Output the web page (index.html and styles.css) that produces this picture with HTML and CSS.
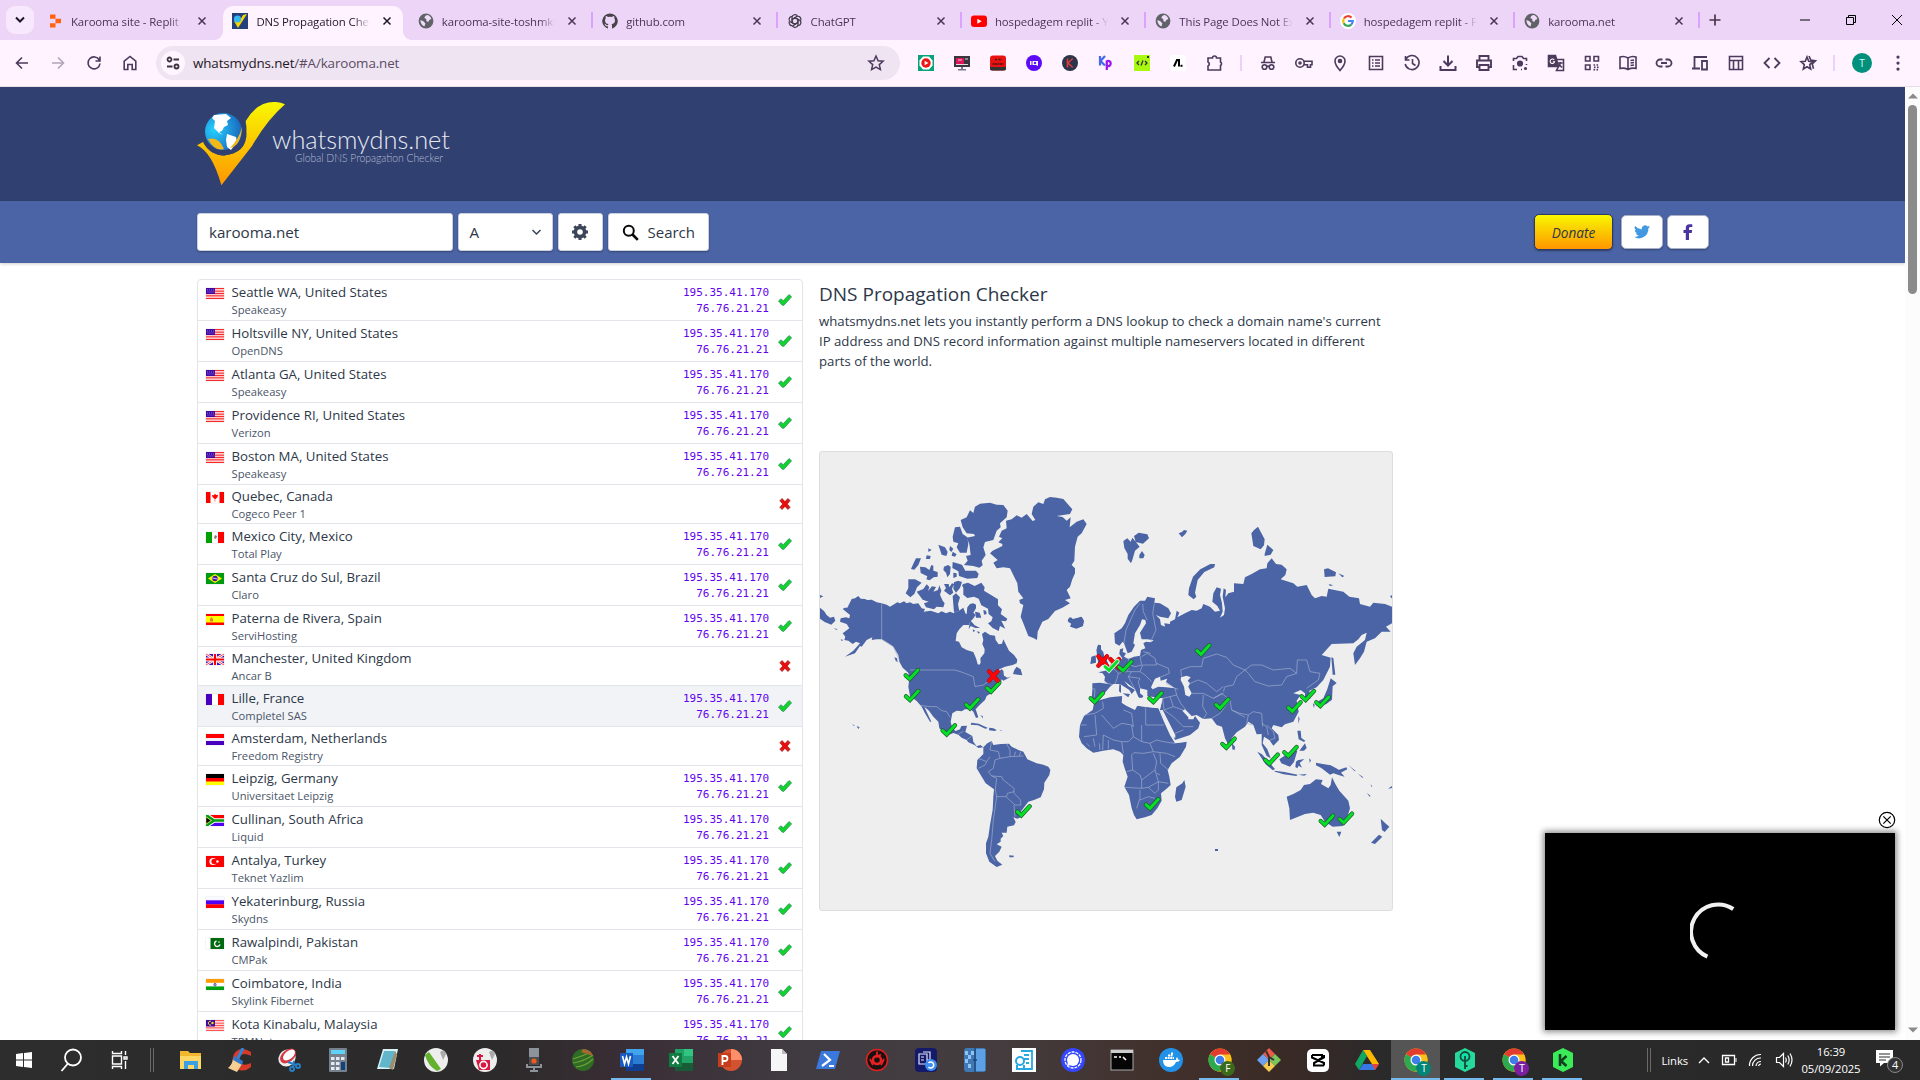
FILE: index.html
```html
<!DOCTYPE html>
<html lang="en">
<head>
<meta charset="utf-8">
<title>DNS Propagation Checker</title>
<link rel="stylesheet" href="styles.css">
</head>
<body>
<svg class="defs" width="0" height="0">
<defs>
<linearGradient id="gold" x1="0" y1="0" x2="0" y2="1"><stop offset="0" stop-color="#f8f800"/><stop offset="1" stop-color="#ff9600"/></linearGradient>
<radialGradient id="ocean" cx=".25" cy=".45" r=".8"><stop offset="0" stop-color="#25d0ff"/><stop offset="1" stop-color="#1a60b8"/></radialGradient>
<symbol id="globe" viewBox="0 0 16 16"><circle cx="8" cy="8" r="7.400" fill="#5f6368"/><path d="M9 2c2 0 4 2 4.300 4l-2 1-1 2-2-1 0-2-2-1 1-2zM2.400 7l3 1.200 2 2.300-1 3C4 12.500 2.400 10 2.400 7z" fill="#f1dcf9"/></symbol>
<symbol id="x" viewBox="0 0 10 10"><path d="M1.500 1.500l7 7M8.500 1.500l-7 7" stroke="currentColor" stroke-width="1.500"/></symbol>
<symbol id="tick" viewBox="0 0 14 12"><path d="M.5 7L3 4.800 5.200 6.800 11 .6 13.600 2.800 5.800 11.400 4 11z" fill="#0fd52b" stroke="#3c9a6a" stroke-width=".9" stroke-linejoin="round"/></symbol>
<symbol id="cross" viewBox="0 0 12 12"><path d="M3 2.800l6 6.400M9 2.800l-6 6.400" stroke="#c03030" stroke-width="3.800" stroke-linecap="square"/><path d="M3 2.800l6 6.400M9 2.800l-6 6.400" stroke="#e80c0c" stroke-width="3"/></symbol>
<g id="mt"><path d="M-18 4L-6 15 19-12" fill="none" stroke="#1f5a30" stroke-width="13" stroke-linecap="round"/><path d="M-18 4L-6 15 19-12" fill="none" stroke="#05e026" stroke-width="9" stroke-linecap="round"/></g>
<g id="mw"><path d="M-18 4L-6 15 19-12" fill="none" stroke="#e8fbea" stroke-width="14" stroke-linecap="round"/><path d="M-18 4L-6 15 19-12" fill="none" stroke="#05e026" stroke-width="9" stroke-linecap="round"/></g>
<g id="mx"><path d="M-13-14L13 14M13-14L-13 14" stroke="#a01020" stroke-width="13" stroke-linecap="round"/><path d="M-13-14L13 14M13-14L-13 14" stroke="#fb0505" stroke-width="10" stroke-linecap="round"/></g>
<symbol id="us" viewBox="0 0 18 11"><rect width="18" height="11" fill="#fff"/><path d="M0 .7h18M0 3.100h18M0 5.500h18M0 7.900h18M0 10.300h18" stroke="#f52a2a" stroke-width="1.300"/><rect width="9" height="6" fill="#4108a8"/><path d="M1 2h7M1.500 4h7" stroke="#8c74d4" stroke-dasharray="1 1"/></symbol>
<symbol id="my" viewBox="0 0 18 11"><rect width="18" height="11" fill="#fff"/><path d="M0 .7h18M0 3.100h18M0 5.500h18M0 7.900h18M0 10.300h18" stroke="#f55" stroke-width="1.300"/><rect width="9" height="6.500" fill="#4108a8"/><path d="M5 1.200a2 2 0 1 0 0 3.800" stroke="#ee0" fill="none"/><circle cx="6.500" cy="3" r="1.200" fill="#ee0"/></symbol>
<symbol id="ca" viewBox="0 0 18 11"><rect width="18" height="11" fill="#fff"/><path d="M0 0h4.500v11H0zM13.500 0H18v11h-4.500zM9 1.500l1 1.500 2-.3-.5 2.300-1.500 1.700-.8.300V9.500h-.5V7L6.500 5 6 3l2 .2z" fill="#f00"/></symbol>
<symbol id="mx2" viewBox="0 0 18 11"><rect width="18" height="11" fill="#fff"/><path d="M0 0h6v11H0z" fill="#00a000"/><path d="M12 0h6v11h-6z" fill="#f00"/><path d="M8 6l1-3 2 1-1 3z" fill="#876"/></symbol>
<symbol id="br" viewBox="0 0 18 11"><rect width="18" height="11" fill="#009a10"/><path d="M9 1l7 4.500L9 10 2 5.500z" fill="#f6f600"/><circle cx="9" cy="5.500" r="2.700" fill="#3c10b0"/><path d="M6.500 5l5 1" stroke="#ccf"/></symbol>
<symbol id="es" viewBox="0 0 18 11"><rect width="18" height="11" fill="#f00"/><rect y="2" width="18" height="6.500" fill="#ff0"/><path d="M4 7.500V5l1.500-2L7 5v2.500z" fill="#e08040"/></symbol>
<symbol id="gb" viewBox="0 0 18 11"><rect width="18" height="11" fill="#4010b0"/><path d="M0 0l18 11M18 0L0 11" stroke="#fff" stroke-width="2.600"/><path d="M0 0l18 11M18 0L0 11" stroke="#f33" stroke-width=".9"/><path d="M9 0v11M0 5.500h18" stroke="#fff" stroke-width="4"/><path d="M9 0v11M0 5.500h18" stroke="#f00" stroke-width="2.200"/></symbol>
<symbol id="fr" viewBox="0 0 18 11"><rect width="18" height="11" fill="#fff"/><path d="M0 0h6v11H0z" fill="#4800c0"/><path d="M12 0h6v11h-6z" fill="#f00"/></symbol>
<symbol id="nl" viewBox="0 0 18 11"><rect width="18" height="11" fill="#f4f0ff"/><path d="M0 0h18v4H0z" fill="#f00"/><path d="M0 7h18v4H0z" fill="#4800c0"/></symbol>
<symbol id="de" viewBox="0 0 18 11"><rect width="18" height="11" fill="#f00"/><path d="M0 0h18v4H0z" fill="#000"/><path d="M0 7.500h18V11H0z" fill="#ff0"/></symbol>
<symbol id="za" viewBox="0 0 18 11"><rect width="18" height="5.500" fill="#f00"/><rect y="5.500" width="18" height="5.500" fill="#5000f0"/><path d="M0 0l8 5.500L0 11M7 5.500h11" stroke="#fff" stroke-width="4.500" fill="none"/><path d="M0 0l8 5.500L0 11M7 5.500h11" stroke="#00a010" stroke-width="2.600" fill="none"/><path d="M0 2l5 3.500L0 9z" fill="#000" stroke="#dd0" stroke-width=".6"/></symbol>
<symbol id="tr" viewBox="0 0 18 11"><rect width="18" height="11" fill="#f00"/><circle cx="7" cy="5.500" r="3.600" fill="#fff"/><circle cx="8.200" cy="5.500" r="2.800" fill="#f00"/><circle cx="11.500" cy="5.500" r="1.200" fill="#fff"/></symbol>
<symbol id="ru" viewBox="0 0 18 11"><rect width="18" height="11" fill="#f8f8ff"/><path d="M0 3.300h18v4.200H0z" fill="#5000f0"/><path d="M0 7.300h18V11H0z" fill="#f00"/></symbol>
<symbol id="pk" viewBox="0 0 18 11"><rect width="18" height="11" fill="#fff"/><path d="M4.500 0H18v11H4.500z" fill="#006a10"/><path d="M10.500 3a2.800 2.800 0 1 0 3.500 3.500" stroke="#fff" fill="none" stroke-width="1.400"/><circle cx="13" cy="4" r=".8" fill="#fff"/></symbol>
<symbol id="in" viewBox="0 0 18 11"><rect width="18" height="11" fill="#fff"/><path d="M0 0h18v3.800H0z" fill="#ff9a00"/><path d="M0 7.400h18V11H0z" fill="#00a010"/><circle cx="9" cy="5.600" r="1.300" fill="#99c" stroke="#53b" stroke-width=".6"/></symbol>
<symbol id="chrome" viewBox="0 0 24 24"><circle cx="12" cy="12" r="11.500" fill="#fbc116"/><path d="M12 12L2 6.300A11.500 11.500 0 0 1 22 6.300z" fill="#e33b2e"/><path d="M12 12L2 6.300A11.500 11.500 0 0 0 11.300 23.500L17 14z" fill="#2da94f"/><path d="M12 6.500h10a11.500 11.500 0 0 1-10.500 17L17 14z" fill="#fbc116"/><circle cx="12" cy="12" r="5.500" fill="#fff"/><circle cx="12" cy="12" r="4.300" fill="#3f7de8"/></symbol>
</defs>
</svg>

<div class="browser">
<header class="tabstrip">
  <div class="tabsearch"><svg width="12" height="8"><path d="M2 1.500l4 4 4-4" fill="none" stroke="#1f1626" stroke-width="2"/></svg></div>
  <div class="tabs">
    <div class="tab"><svg class="fav" viewBox="0 0 16 16"><path d="M3 1.500h5.500v4.200H3zM8.500 5.700H14v4.600H8.500zM3 10.300h5.500v4.200H3z" fill="#ff6310"/></svg><span>Karooma site - Replit</span><svg class="close"><use href="#x"/></svg></div>
    <div class="tab active"><svg class="fav" viewBox="0 0 16 16"><rect width="16" height="16" fill="#24407c"/><path d="M2 8l4 7 9-14-4 1-4 7z" fill="#f8d400"/><circle cx="5.500" cy="6" r="3.600" fill="#35b8f0"/></svg><span>DNS Propagation Checker</span><svg class="close"><use href="#x"/></svg></div>
    <div class="tab"><svg class="fav"><use href="#globe"/></svg><span>karooma-site-toshmkt</span><svg class="close"><use href="#x"/></svg></div>
    <div class="tab sep"><svg class="fav" viewBox="0 0 16 16"><path d="M8 .4a7.700 7.700 0 0 0-2.500 15c.4 0 .5-.2.500-.5v-1.600c-2 .4-2.600-.8-2.800-1.400-.3-.6-.8-1-.8-1.200.9-.3 1.500.7 1.700 1 .6.800 1.300.7 1.900.4.100-.5.300-.8.500-1-1.800-.2-3.500-.9-3.500-3.800 0-.9.300-1.500.8-2.100-.2-.5-.3-1.200.1-2.100.7 0 1.500.5 2.100.9a7 7 0 0 1 4 0c.6-.4 1.400-.9 2.100-.9.400.9.300 1.600.1 2.100.5.600.8 1.200.8 2.100 0 2.900-1.800 3.600-3.500 3.800.3.300.5.700.5 1.500v2.300c0 .3.100.6.500.5A7.700 7.700 0 0 0 8 .4z" fill="#46434b"/></svg><span>github.com</span><svg class="close"><use href="#x"/></svg></div>
    <div class="tab sep"><svg class="fav" viewBox="0 0 16 16" fill="none" stroke="#3c3842" stroke-width="1.200"><g id="petal"><path d="M5 9.500V4.300A3 3 0 0 1 10.500 3"/><path d="M5 9.500l3 1.700"/></g><use href="#petal" transform="rotate(60 8 8)"/><use href="#petal" transform="rotate(120 8 8)"/><use href="#petal" transform="rotate(180 8 8)"/><use href="#petal" transform="rotate(240 8 8)"/><use href="#petal" transform="rotate(300 8 8)"/></svg><span>ChatGPT</span><svg class="close"><use href="#x"/></svg></div>
    <div class="tab sep"><svg class="fav" viewBox="0 0 16 16"><rect y="2.500" width="16" height="11.500" rx="3" fill="#f00"/><path d="M6.300 5.700v5l4.400-2.500z" fill="#fff"/></svg><span>hospedagem replit - YouTube</span><svg class="close"><use href="#x"/></svg></div>
    <div class="tab sep"><svg class="fav"><use href="#globe"/></svg><span>This Page Does Not Exist</span><svg class="close"><use href="#x"/></svg></div>
    <div class="tab sep"><svg class="fav" viewBox="0 0 16 16" fill="none" stroke-width="2.200"><circle cx="8" cy="8" r="8" fill="#fff"/><path d="M4 5.500A4.800 4.800 0 0 1 11.500 4.600" stroke="#ea4335"/><path d="M3.700 10.200a4.800 4.800 0 0 1 .3-4.700" stroke="#fbbc05"/><path d="M11.200 11.600a4.800 4.800 0 0 1-7.500-1.400" stroke="#34a853"/><path d="M8 8h4.800a4.800 4.800 0 0 1-1.600 3.600" stroke="#4285f4"/></svg><span>hospedagem replit - Pesquisa</span><svg class="close"><use href="#x"/></svg></div>
    <div class="tab sep"><svg class="fav"><use href="#globe"/></svg><span>karooma.net</span><svg class="close"><use href="#x"/></svg></div>
  </div>
  <div class="newtab"><svg width="12" height="12"><path d="M6 .5v11M.5 6h11" stroke="#49354f" stroke-width="1.700"/></svg></div>
  <div class="winbtns"><svg width="12" height="12"><path d="M1 6h10" stroke="#000"/></svg><svg width="12" height="12" fill="none" stroke="#000"><path d="M1.500 3.500h7v7h-7zM3.500 3.500v-2h7v7h-2"/></svg><svg width="12" height="12"><path d="M1 1l10 10M11 1L1 11" stroke="#000"/></svg></div>
</header>

<div class="toolbar">
  <div class="nav">
    <svg viewBox="0 0 20 20"><path d="M16 10H4.500M10 4.500L4.500 10l5.500 5.500"/></svg>
    <svg class="dim" viewBox="0 0 20 20"><path d="M4 10h11.500M10 4.500l5.500 5.500-5.500 5.500"/></svg>
    <svg viewBox="0 0 20 20"><path d="M15.300 7A6 6 0 1 0 16 10.500M16 3.500V8h-4.500"/></svg>
    <svg viewBox="0 0 20 20"><path d="M4.200 8.200L10 3.500l5.800 4.700V16.500h-3.600v-5H7.800v5H4.200z"/></svg>
  </div>
  <div class="omnibox">
    <div class="site"><svg width="16" height="16" fill="none" stroke="#3b3340" stroke-width="1.800"><circle cx="4.500" cy="4.500" r="2"/><path d="M8.500 4.500H14M2 11.500h5.500"/><circle cx="11.500" cy="11.500" r="2"/></svg></div>
    <span class="url"><b>whatsmydns.net</b>/#A/karooma.net</span>
    <svg class="star" viewBox="0 0 20 20"><path d="M10 3l2.100 4.700 5 .5-3.800 3.400 1.100 5L10 14l-4.400 2.600 1.100-5-3.800-3.400 5-.5z"/></svg>
  </div>
  <div class="exts">
    <svg viewBox="0 0 16 16"><rect width="16" height="16" fill="#08a37a"/><path d="M5 1.500h6l3.500 4v5l-3.500 4H5l-3.500-4v-5z" fill="#fff"/><circle cx="8" cy="8" r="4.700" fill="#f01414"/><path d="M6.600 5.700v4.600L10.500 8z" fill="#fff"/></svg>
    <svg viewBox="0 0 16 16"><path d="M0 1h16v11H0z" fill="#39363f"/><path d="M2 3h8v6H2z" fill="#e01458"/><path d="M4 5h4M11 4h3M2 9.500h12" stroke="#ddd"/><path d="M7 12h2v2H7zM4 14h8v1.500H4z" fill="#777a90"/></svg>
    <svg viewBox="0 0 16 16"><rect y=".5" width="16" height="15" rx="3" fill="#e91212"/><path d="M0 12h16v2q0 1.500-3 1.500H3Q0 15.500 0 14z" fill="#333"/><path d="M5 4.500h2M8.500 4.500h3M2.500 9h11" stroke="#501010" stroke-width="1.500" stroke-dasharray="2 .5"/></svg>
    <svg viewBox="0 0 16 16"><circle cx="8" cy="8" r="8" fill="#5b0cf5"/><path d="M4 6h1.500v4H4zM6.500 6H12v5l-2-1H6.500z" fill="#fff"/><circle cx="9" cy="8" r="1.200" fill="#5b0cf5"/></svg>
    <svg viewBox="0 0 16 16"><circle cx="8" cy="8" r="8" fill="#2b3448"/><path d="M5.500 3.500v9M10.800 3.500L6 8l4.800 4.500" stroke="#e03c3c" stroke-width="1.500" fill="none"/></svg>
    <svg viewBox="0 0 16 16" fill="none" stroke-width="2.200"><path d="M2 1v9.500M7 1L2.500 6 7 10.500" stroke="#4468ee"/><path d="M8.800 15V5.500M9 6a2.700 2.700 0 1 1 0 5" stroke="#9c14ee"/></svg>
    <svg viewBox="0 0 16 16"><rect width="16" height="16" fill="#a8f810"/><path d="M5 6L3 8l2 2M11 6l2 2-2 2M9 5.500l-2 5" stroke="#333" fill="none" stroke-width="1.300"/><path d="M13 1h2v2h-2z" fill="#333"/></svg>
    <svg viewBox="0 0 16 16"><rect width="16" height="16" rx="3" fill="#fff"/><path d="M4 11.500L7 5h2v6.500" stroke="#000" fill="none" stroke-width="2"/><path d="M10.500 9.800h2v2h-2z"/></svg>
    <svg class="ln big" viewBox="0 0 20 20"><path d="M3 5h4.500a2 2 0 0 1 4 0H15.500v4a2 2 0 0 1 0 3.500V17H3v-4a2.200 2.200 0 0 0 0-4z"/></svg>
  </div>
  <i class="vr"></i>
  <div class="exts acts">
    <svg viewBox="0 0 20 20"><path d="M3 9.500h14M6 9l1.200-5h5.600L14 9"/><circle cx="6.500" cy="14" r="2.300"/><circle cx="13.500" cy="14" r="2.300"/><path d="M8.800 13.500q1.200-.8 2.400 0"/></svg>
    <svg viewBox="0 0 20 20"><circle cx="6" cy="10" r="4.200"/><circle cx="6" cy="10" r="1"/><path d="M10 8.300h8v3.400h-1.500v2.500h-3v-2.500H10"/></svg>
    <svg viewBox="0 0 20 20"><path d="M10 17.500C6 13 5 10.500 5 8a5 5 0 0 1 10 0c0 2.500-1 5-5 9.500z"/><circle cx="10" cy="8" r="1.500" fill="#4d3a5c"/></svg>
    <svg viewBox="0 0 20 20"><path d="M3.500 3.500h13v13h-13zM6 7h1.500M9 7h5M6 10h1.500M9 10h5M6 13h1.500M9 13h5"/></svg>
    <svg viewBox="0 0 20 20"><path d="M4 6a7 7 0 1 1-.8 5M3.500 3v4h4M10.500 6v4.500l3 2"/></svg>
    <svg viewBox="0 0 20 20"><path stroke-width="2" d="M10 2.500v9.500M5.500 8l4.500 4.500L14.500 8M2.500 13v4h15v-4"/></svg>
    <svg viewBox="0 0 20 20"><path d="M5.500 7V3h9v4M5.500 14H3V7.500h14V14h-2.500M5.500 12h9v5h-9z" stroke-width="1.900"/></svg>
    <svg viewBox="0 0 20 20"><path d="M3.500 8V5.500h3L8 3.500h4l1.500 2h3V8M3.500 12v4.500H7M16.500 11v1M12 16.500h-1"/><circle cx="10" cy="10.500" r="2.300" fill="#4d3a5c"/><circle cx="15.500" cy="15.500" r=".8"/></svg>
    <svg viewBox="0 0 20 20"><path d="M2.500 2.500h7l3 11h-10z" fill="#4d3a5c"/><path d="M11 6.500h6.500v11h-7l2-4M12 10h4.500M14.500 9q-.5 3-2 4.500M13 11.500l3 3"/><path d="M8.200 7a2.200 2.200 0 1 0 .3 1.800H6.800" stroke="#fff" stroke-width="1.100"/></svg>
    <svg viewBox="0 0 20 20"><path d="M3.500 3.500h4.500v4.500H3.500zM12 3.500h4.500v4.500H12zM3.500 12h4.500v4.500H3.500z"/><path d="M11.500 12h5.500M12 14.300h5.500M11.500 16.600h5.500" stroke-dasharray="1.600 1.400"/></svg>
    <svg viewBox="0 0 20 20"><path d="M10 5q-4-2.500-8-1v11.500q4-1 8 1 4-2 8-1V4q-4-1.500-8 1zM10 5v11.500M12.500 7.500l3.500-.5M12.500 10l3.500-.5M12.500 12.500l3.500-.5"/></svg>
    <svg viewBox="0 0 20 20"><path stroke-width="1.800" d="M8.500 6.500H6a3.500 3.500 0 0 0 0 7h2.500M11.500 6.500H14a3.500 3.500 0 0 1 0 7h-2.500M7 10h6"/></svg>
    <svg viewBox="0 0 20 20"><path d="M2 15.500h8M4.500 15V4H17M12 8h5v8.500h-5z" stroke-width="1.800"/></svg>
    <svg viewBox="0 0 20 20"><path d="M3.500 3.500h13v13h-13zM3.500 7.500h13M7.500 7.500v9M12.500 7.500v9"/></svg>
    <svg viewBox="0 0 20 20"><path stroke-width="1.800" d="M7.500 5L2.500 10l5 5M12.500 5l5 5-5 5"/></svg>
    <svg viewBox="0 0 20 20"><path d="M9 4l1.700 4.300 4.300.3-3.300 3 1 4.400L9 13.700 5.300 16l1-4.400L3 8.600l4.300-.3zM11 3l1.800 4 4.700.8-3.300 3 1.300 5"/></svg>
  </div>
  <i class="vr"></i>
  <div class="avatar">T</div>
  <svg class="kebab" width="6" height="18"><path d="M3 3v.1M3 9v.1M3 15v.1" stroke="#4d3a5c" stroke-width="3.200" stroke-linecap="round"/></svg>
</div>

<div class="view">
<main class="page">
  <div class="brand">
    <svg width="260" height="90" viewBox="0 0 260 90"><path d="M48.700 19Q60 0 76.600 0 83-.3 88 2.300 70 18 55 44L24.400 83.300Q15 50 0 43.300L6 40Q13 53 27 53.500 49 51 49.500 32z" fill="url(#gold)"/><circle cx="26.500" cy="29.500" r="18.500" fill="url(#ocean)"/><path d="M17 13l12-1 5 4-4 3 1 4-4 2-2 4-3 1 4 3-4-2-5-5 1-7-3-3zM30 32l9 3 1 5-6 8-4-3-1-7z" fill="#fff"/><path d="M11 37q11-3 16 10-9 3-16-10zM45 25q-3 12-12 21 11-2 12-21z" fill="#f2b81a"/><path d="M6 40Q13 53 27 53.500 49 51 49.500 32L48.700 19Q54 50 28 51 13 51 6 40z" fill="#304070"/><text class="wordmark" x="75" y="46.500" textLength="178" lengthAdjust="spacingAndGlyphs">whatsmydns.net</text><text class="tagline" x="98" y="60" textLength="148" lengthAdjust="spacingAndGlyphs">Global DNS Propagation Checker</text></svg>
  </div>
  <div class="searchbar">
    <div class="box query">karooma.net</div>
    <div class="box type">A<svg width="11" height="7"><path d="M1.500 1l4 4 4-4" fill="none" stroke="#3a4458" stroke-width="1.500"/></svg></div>
    <div class="box gear"><svg width="16" height="16" viewBox="0 0 16 16"><circle cx="8" cy="8" r="4.600" fill="none" stroke="#3b465a" stroke-width="3.600"/><path d="M8 0v3M8 13v3M0 8h3M13 8h3M2.300 2.300l2 2M11.700 11.700l2 2M2.300 13.700l2-2M11.700 4.300l2-2" stroke="#3b465a" stroke-width="3"/></svg></div>
    <div class="box go"><svg width="17" height="17" fill="none" stroke="#0a0a0a"><circle cx="6.800" cy="6.800" r="5" stroke-width="2"/><path d="M10.500 10.500l5.300 5.300" stroke-width="2.600"/></svg>Search</div>
    <div class="donate">Donate</div>
    <div class="box social"><svg width="16" height="14" viewBox="0 0 24 20"><path d="M24 2.300a10 10 0 0 1-2.800.8A5 5 0 0 0 23.300.4a10 10 0 0 1-3.100 1.200 4.900 4.900 0 0 0-8.400 4.500A14 14 0 0 1 1.700 1a4.900 4.900 0 0 0 1.500 6.500A5 5 0 0 1 1 7a4.900 4.900 0 0 0 3.900 4.800 5 5 0 0 1-2.200.1 4.900 4.900 0 0 0 4.600 3.400A9.900 9.900 0 0 1 0 17.300 14 14 0 0 0 21.500 4.900 10 10 0 0 0 24 2.300z" fill="#4299e1"/></svg></div>
    <div class="box social fb"><svg width="10" height="16" viewBox="0 0 10 16"><path d="M2.800 16V9H.5V6h2.300V4Q2.800.3 6.500.3H9.300V3H7.500Q6 3 6 4.300V6h3.200l-.5 3H6v7z" fill="#4a35a0"/></svg></div>
  </div>
  <div class="content">
    <div class="results">
      <div class="row"><svg class="flag"><use href="#us"/></svg><div class="who"><p>Seattle WA, United States</p><small>Speakeasy</small></div><div class="ips">195.35.41.170<br>76.76.21.21</div><svg class="st"><use href="#tick"/></svg></div>
      <div class="row"><svg class="flag"><use href="#us"/></svg><div class="who"><p>Holtsville NY, United States</p><small>OpenDNS</small></div><div class="ips">195.35.41.170<br>76.76.21.21</div><svg class="st"><use href="#tick"/></svg></div>
      <div class="row"><svg class="flag"><use href="#us"/></svg><div class="who"><p>Atlanta GA, United States</p><small>Speakeasy</small></div><div class="ips">195.35.41.170<br>76.76.21.21</div><svg class="st"><use href="#tick"/></svg></div>
      <div class="row"><svg class="flag"><use href="#us"/></svg><div class="who"><p>Providence RI, United States</p><small>Verizon</small></div><div class="ips">195.35.41.170<br>76.76.21.21</div><svg class="st"><use href="#tick"/></svg></div>
      <div class="row"><svg class="flag"><use href="#us"/></svg><div class="who"><p>Boston MA, United States</p><small>Speakeasy</small></div><div class="ips">195.35.41.170<br>76.76.21.21</div><svg class="st"><use href="#tick"/></svg></div>
      <div class="row fail"><svg class="flag"><use href="#ca"/></svg><div class="who"><p>Quebec, Canada</p><small>Cogeco Peer 1</small></div><svg class="st"><use href="#cross"/></svg></div>
      <div class="row"><svg class="flag"><use href="#mx2"/></svg><div class="who"><p>Mexico City, Mexico</p><small>Total Play</small></div><div class="ips">195.35.41.170<br>76.76.21.21</div><svg class="st"><use href="#tick"/></svg></div>
      <div class="row"><svg class="flag"><use href="#br"/></svg><div class="who"><p>Santa Cruz do Sul, Brazil</p><small>Claro</small></div><div class="ips">195.35.41.170<br>76.76.21.21</div><svg class="st"><use href="#tick"/></svg></div>
      <div class="row"><svg class="flag"><use href="#es"/></svg><div class="who"><p>Paterna de Rivera, Spain</p><small>ServiHosting</small></div><div class="ips">195.35.41.170<br>76.76.21.21</div><svg class="st"><use href="#tick"/></svg></div>
      <div class="row fail"><svg class="flag"><use href="#gb"/></svg><div class="who"><p>Manchester, United Kingdom</p><small>Ancar B</small></div><svg class="st"><use href="#cross"/></svg></div>
      <div class="row hover"><svg class="flag"><use href="#fr"/></svg><div class="who"><p>Lille, France</p><small>Completel SAS</small></div><div class="ips">195.35.41.170<br>76.76.21.21</div><svg class="st"><use href="#tick"/></svg></div>
      <div class="row fail"><svg class="flag"><use href="#nl"/></svg><div class="who"><p>Amsterdam, Netherlands</p><small>Freedom Registry</small></div><svg class="st"><use href="#cross"/></svg></div>
      <div class="row"><svg class="flag"><use href="#de"/></svg><div class="who"><p>Leipzig, Germany</p><small>Universitaet Leipzig</small></div><div class="ips">195.35.41.170<br>76.76.21.21</div><svg class="st"><use href="#tick"/></svg></div>
      <div class="row"><svg class="flag"><use href="#za"/></svg><div class="who"><p>Cullinan, South Africa</p><small>Liquid</small></div><div class="ips">195.35.41.170<br>76.76.21.21</div><svg class="st"><use href="#tick"/></svg></div>
      <div class="row"><svg class="flag"><use href="#tr"/></svg><div class="who"><p>Antalya, Turkey</p><small>Teknet Yazlim</small></div><div class="ips">195.35.41.170<br>76.76.21.21</div><svg class="st"><use href="#tick"/></svg></div>
      <div class="row"><svg class="flag"><use href="#ru"/></svg><div class="who"><p>Yekaterinburg, Russia</p><small>Skydns</small></div><div class="ips">195.35.41.170<br>76.76.21.21</div><svg class="st"><use href="#tick"/></svg></div>
      <div class="row"><svg class="flag"><use href="#pk"/></svg><div class="who"><p>Rawalpindi, Pakistan</p><small>CMPak</small></div><div class="ips">195.35.41.170<br>76.76.21.21</div><svg class="st"><use href="#tick"/></svg></div>
      <div class="row"><svg class="flag"><use href="#in"/></svg><div class="who"><p>Coimbatore, India</p><small>Skylink Fibernet</small></div><div class="ips">195.35.41.170<br>76.76.21.21</div><svg class="st"><use href="#tick"/></svg></div>
      <div class="row"><svg class="flag"><use href="#my"/></svg><div class="who"><p>Kota Kinabalu, Malaysia</p><small>TPMNet</small></div><div class="ips">195.35.41.170<br>76.76.21.21</div><svg class="st"><use href="#tick"/></svg></div>
    </div>
    <div class="side">
      <h1>DNS Propagation Checker</h1>
      <p class="intro">whatsmydns.net lets you instantly perform a DNS lookup to check a domain name's current<br>IP address and DNS record information against multiple nameservers located in different<br>parts of the world.</p>
      <div class="map"><svg width="572" height="458" viewBox="820 452 572 458">
        <g transform="translate(810 440) scale(.33333)" fill="#4a64a5">
          <path d="M104 503L112 503 125 477 135 475 145 468 152 476 165 477 172 480 185 479 200 487 215 490 230 494 240 500 262 487 270 490 282 484 290 490 300 487 310 492 325 490 335 505 345 507 341 515 362 512 385 520 395 514 408 520 420 515 432 520 434 515 445 514 460 503 466 520 470 523 472 502 480 492 490 490 498 494 498 505 490 518 497 525 488 538 480 545 477 555 460 555 448 568 440 580 437 603 447 605 455 622 470 630 490 636 498 655 503 673 508 674 512 668 511 655 523 640 524 628 517 612 520 600 516 582 525 575 540 585 555 587 557 600 566 613 576 611 580 598 590 618 597 632 612 645 622 659 620 670 608 675 585 680 568 688 560 698 575 688 580 692 582 707 592 713 603 710 580 722 575 718 572 732 560 745 545 758 530 768 525 780 508 796 497 808 505 832 498 834 490 815 482 808 465 808 455 814 440 812 427 820 422 845 427 865 437 873 450 868 454 858 471 857 466 876 487 888 490 905 500 919 511 915 520 922 505 924 495 916 475 907 470 900 455 893 445 884 430 879 415 885 405 883 388 865 385 845 370 830 357 812 343 800 352 820 364 845 360 845 345 820 335 800 320 783 300 768 295 740 298 715 295 698 278 683 268 665 265 645 250 620 235 610 215 598 200 598 185 600 187 592 170 600 155 620 150 618 135 640 105 650 130 632 150 610 138 605 128 612 115 602 103 600 106 590 98 580 118 565 110 552 90 545 92 535 108 532 118 535 120 525 98 507z"/>
          <path d="M30 503l12 10 8 12 10 8 12-3 4 12-12 12-20-8-14-10zM30 465l10 4-10 5zM253 652l8 3 2 12-6-5zM276 678l26 16-6 5zM620 680l12 8 5 18-28-4 4-12zM574 705l15 7-8 8-12-8z"/>
          <path d="M540 340L548 332 577 318 577 312 565 307 577 295 567 290 575 272 590 265 588 242 605 238 620 226 635 233 650 222 668 243 676 240 665 222 670 200 685 187 700 192 705 178 720 171 740 173 760 177 787 208 780 222 740 228 758 231 770 242 782 232 779 262 800 245 820 238 830 252 815 280 803 290 795 320 793 362 785 375 795 385 795 400 787 418 780 440 770 450 782 475 765 480 780 490 757 503 735 513 715 537 697 545 683 575 681 600 672 595 655 588 640 550 632 530 640 495 630 490 628 480 640 475 625 455 622 430 600 385 580 382 560 385 550 368 563 360z"/>
          <path d="M452 240L470 232 480 211 490 219 495 200 510 191 540 188 560 194 580 195 593 212 590 232 570 250 572 262 560 272 550 300 525 306 520 322 527 345 515 362 518 376 508 383 490 378 462 375 473 362 468 348 482 345 478 312 470 293 495 288 492 282 470 280 458 262z"/>
          <path d="M435 262L450 260 458 282 472 292 475 312 470 338 450 338 440 322 445 310 430 305 428 290zM385 314l20 8 8 14-4 12-14-4zM420 318l10 8-6 10-6-6zM355 325l10 5-10 6zM428 335l12 8-5 7-10-3zM350 346l12 2-2 9-12 0zM318 355l15 0-8 20-12 14-10-2 8-18zM330 380l16 2 12 8 6-15 6 2 0 15 13 4 0 14-12 2-12 9-10-3 3-9-20-10zM402 380l12-5 8 5-2 22-8 10-4-14-8-8zM428 366l28 8 10 18 32 0 8 10-4 12-30 2-25-8-2-14-18-10zM430 398l10 2 0 10-10 4z"/>
          <path d="M295 418l20 0 20 10-14 14-8 20-12 10-14-12 8-16zM320 455l20-8 10-14 8 8-4 12 12-14 12 2-8 14 14-5 4-14 6 16-4 12 8 18 6 8-4 12-20-2-8 8-24-6-6-12 14-5-18-6zM402 432l14 0 2 10 8-12 6 2-6 14 4 12-10 8-18-14 6-8zM432 427l12-5 12 4-6 18-12 14-8-12zM428 468l10-8 12 12-6 20 4 22-16 2-2-22zM460 432l14-4 20 10 20-10 10 14-2 10 20 12 22 14 0 18 12 12-4 14 20 14-4 8-14-2 12 24-16-8-4 15-18-9-14-14 10-6 4-12-12-10-2-16-20-10-8-20-14-6-20 4-12-10 0-20-4-8zM480 540l14 16 16 8-14 0-14-6-6 10zM520 510l8 2 2 10-8 2zM500 574l10 2-4 5zM488 568l8 4-6 4zM495 515l14 3 5 15-16 0z"/>
          <path d="M773 540l6-8 8 5 20-2 8-5 7 12-4 16-18 7-20-6 4-8-9-5zM484 848l22 3 28 13-8 2-22-10-22-2zM538 863l12 2 10 5-5 3-18-2zM568 870l7 0-1 2zM515 828l4 0-2 8zM510 826l8 2-1 3zM70 565l12 2-1 3zM92 598l8 2-5 3zM126 853l8 3-2 2zM140 858l9 4-4 5zM598 1246l14 1-2 5-12 0z"/>
          <path d="M520 922L532 910 545 903 550 915 572 912 597 911 605 920 625 930 640 935 652 958 680 970 700 974 715 980 721 990 718 1005 703 1028 702 1048 692 1072 672 1080 655 1085 640 1105 632 1115 635 1130 622 1136 610 1132 617 1146 612 1156 592 1160 590 1178 575 1178 580 1188 572 1196 572 1205 560 1213 575 1220 568 1235 555 1248 562 1262 577 1274 560 1281 538 1265 528 1240 528 1210 535 1190 540 1155 548 1110 550 1070 552 1048 527 1030 512 1005 500 985 502 960 520 942z"/>
          <path d="M860 628l5-14 8 2 0 12 7 8 2 12 8 12 4 10-22 6-8-3 2-10-5-8zM845 650l12-4 0 20-16 5z"/>
        </g>
        <g transform="translate(810 440) scale(.33333)" class="borders">
          <path d="M215 490V598L250 620 268 660M300 690H435L460 698 490 710 495 740 520 735 540 720 560 718M330 796L360 800 380 800 395 812 410 815 420 832M445 882l15-8M470 900l15-12M545 903L540 930 565 935 570 955 555 960 550 985 535 995 545 1008 575 1010 580 1020 612 1045 612 1060 632 1080 632 1095 615 1095 588 1070 560 1070 556 1048 560 1015 545 1008M560 1070L550 1140 545 1200 540 1240 555 1265M570 955L600 950 600 930 590 912M600 950L640 948M617 935L612 948M632 935L628 948M505 955L530 965 540 950M505 985L525 975 530 965M612 1095L615 1130M590 1070L592 1060 612 1055"/>
        </g>
        <g transform="translate(1060 480) scale(.33333)">
          <path fill="#4a64a5" d="M97 610L120 608 145 612 133 602 135 590 128 580 115 577 135 572 145 566 160 562 175 545 187 535 178 522 180 508 190 505 188 516 198 520 192 530 205 537 222 530 240 527 243 510 256 505 250 490 258 485 272 487 281 481 262 478 245 478 240 458 258 430 256 420 246 418 240 435 225 460 220 490 225 495 215 515 203 520 192 490 188 485 178 497 165 490 163 460 185 445 195 430 205 405 222 380 240 362 255 362 262 350 285 355 283 368 300 370 325 385 333 400 325 415 300 410 288 405 300 418 303 435 315 440 313 430 330 432 330 425 345 418 350 392 358 398 352 412 375 400 395 390 410 392 425 385 430 372 450 380 465 395 480 392 472 378 457 365 460 340 470 322 483 326 480 345 486 370 488 395 480 413 492 405 495 385 488 350 491 325 498 330 496 352 505 340 522 335 522 310 550 312 555 292 575 282 600 268 620 265 622 250 635 235 648 252 665 254 680 268 676 285 662 298 700 310 712 320 740 315 755 345 765 355 785 348 800 350 805 326 850 335 868 350 897 355 900 372 930 380 940 368 975 372 996 380V430L978 440 992 455 965 455 945 475 920 485 912 515 900 535 885 555 880 520 890 500 915 480 920 458 905 465 895 478 880 490 815 492 785 525 812 533 810 560 790 600 770 622 748 632 752 655 735 660 735 640 722 630 700 640 722 645 710 662 716 695 700 725 675 733 665 742 640 735 635 745 655 765 657 780 640 797 628 780 612 770 608 790 622 808 632 835 620 828 605 795 605 762 590 763 580 735 565 725 555 740 530 757 515 775 515 792 505 795 495 775 486 740 470 735 455 715 430 717 410 705 395 708 375 688 367 692 385 712 385 718 400 718 405 708 420 728 415 745 390 765 345 780 335 755 315 720 300 690 308 655 285 652 262 648 262 630 240 625 240 640 250 648 245 660 235 650 225 628 192 602 205 618 225 630 215 642 208 630 180 612 160 612 150 620 140 632 120 655 105 660 95 655 97 630z"/>
          <path fill="#4a64a5" d="M102 670L120 660 150 652 187 648 185 668 200 678 225 690 232 677 265 682 295 685 312 725 330 765 345 790 362 788 380 785 378 800 360 830 335 850 323 870 328 890 332 915 318 928 303 940 305 962 292 985 275 1005 255 1012 230 1018 222 1005 215 985 207 945 193 920 203 890 195 868 188 845 190 825 180 815 160 808 130 812 100 818 80 805 65 790 57 770 60 735 72 708 98 690zM373 900l4 20-12 40-16 5-4-15 4-28 18-12zM190 183l12-8 10 10 5-12 10 12 12 15-14 12-8 28-4 10-10-14 0-14-10-18zM222 168l14-10 26 5 5 12-18 16-22-5zM238 225l8-12 8 12-4 10-12 0zM356 160l10-4 6-6 10 2-6 10-10 10zM385 345l2-20 12-35 22-22 30-16 14 0-2 10-30 14-20 24-8 38 4 12-8 8zM574 160l8-10 12-10 20 38-2 18-10 12-22-10zM614 222l8-28 18 16-8 14-18 4zM792 268l12-3 24 12-2 12-32 2zM835 280l18 8-6 4zM806 312l14 4-10 2zM990 348l6-2v10z"/>
          <path fill="#4a64a5" d="M814 532l6 2 6 50-8 0zM812 595l18 14-12 10-2 40-18 14-28 4-4-8 24-14 12-28zM758 670l6 4-2 10zM715 708l4 8-4 16zM712 752l10 0 2 22 12 8-4 4-16-8zM735 790l5 14-8 8-14 0zM592 815l14 8 25 28 14 16-6 4-22-18zM643 872l30 4 40 8-4 4-38-5-26-8zM658 838l20-14 22-16 12 4-10 34-12 14-26-10zM708 845l5-4 20-4-14 12 7 14-10-6-4 8-6-4zM768 848l20 4 24 4 22 12 20 22-16-4-18-6-10 4-26-20-16-8zM835 870l24-8 3 6-20 10zM516 790l9 10-1 10-7-2zM25 418l8-6 6 6 24-8 8 14-2 14-20 8-18-6 4-8zM110 510l4-16 8 4-2 12 10 12 6 16 8 12-26 8-4-12zM94 532l12-4 2 20-16 4zM178 612l5 2 0 25-6-5zM188 640l22 2-5 10zM283 660l12-2-5 5zM715 884l26-2-8 5zM748 835l5 6-4 8z"/>
          <path fill="#4a64a5" d="M680 950L700 942 722 930 732 915 750 912 768 898 788 900 783 912 805 925 812 915 816 892 826 912 838 932 865 962 870 985 862 1012 848 1038 818 1040 795 1025 782 1005 760 998 735 1002 690 1020 688 985zM830 1055l14 0-6 16zM962 1016l14 14 12 10-14 16-8-6zM933 1088l24-24 10 6-22 22zM465 1107l9 0 0 6-9 0zM920 938l12 10-3 2zM932 912l5 8-3 0zM984 926l12-8v6zM865 855l22 18-3 1zM892 880l18 12-3 1z"/>
          <path fill="#eee" d="M273 622L285 596 300 590 302 602 322 596 318 606 345 625 318 622 295 620 278 628zM363 592L380 587 392 592 383 602 390 610 385 620 395 640 388 650 376 645 372 620 362 600zM190 672L232 677 300 685 308 655 262 650 235 655 225 648 200 655 186 648zM300 690l8 0 38 75 0 10-12-10z"/>
        </g>
        <g transform="translate(1060 480) scale(.33333)" class="borders">
          <path d="M192 490L198 450 225 390 240 370M262 420L250 395 248 372M283 370L278 400 288 450 272 485M97 625L105 628 103 652M133 608L158 614M160 565L175 580 170 600 165 612M205 535L210 555 200 575 175 580M240 527L245 555 225 560 210 555M250 515L272 520M245 530L262 520 285 535 290 555 248 555M290 550L325 565 328 580 300 592M248 555L240 575 255 585 275 605M240 575L215 575 205 590 240 595 235 605 240 625M205 590L215 610 225 628M200 575L215 575M318 610L345 625 355 628M345 625L350 645 330 650 308 655M350 645L362 670 378 690M308 655L312 690 340 680 330 650M340 680L370 690M312 690L340 710 370 740 400 740M345 760L370 750M365 590L362 570 390 560 425 560 430 535 470 522 500 532 520 555 555 570 530 590 520 615 495 620 490 635M390 610L415 600 440 610 470 635 490 620M395 640L430 640 460 655 490 640M430 645L428 680 440 700 430 717M460 655L485 640 510 660 480 700 455 715M555 570L575 555 605 555 640 570 690 565 710 580 680 590 665 615 625 618 585 605 565 580 555 570M710 580L712 540 740 540 750 575 780 580 775 600 740 625M510 660L515 690 540 700 565 705 580 695 605 700 608 740M515 690L555 712M565 705L560 730 575 735M605 730L620 740 625 765M620 735L640 755 645 775 630 780M128 665L130 685 105 700 75 705M105 705L110 765 72 770M125 705L160 745 185 730 215 735 220 740 215 700 190 690M257 682V735H312M215 735L220 770 205 785 185 785 160 780 130 765M100 775L105 800M118 790L120 810M130 765L128 810M145 780L145 808M185 785L190 820M220 770L245 785 270 790 290 780 310 785 345 790M245 735L245 785M270 790L280 815 320 820 345 830M215 825L222 818 250 820 280 815M300 820L302 850 325 870M215 825L218 870 200 875M218 870L240 885 245 900 285 870 290 845 280 820M245 900L245 925 195 922M245 925L265 922 295 905 285 870M240 930L240 955 230 985M240 960L265 950 285 955M265 922L285 940 295 930 295 905 325 910M290 880L300 885M60 735L80 735M80 790L90 800"/>
        </g>
        <g transform="translate(810 440) scale(.33333)">
          <use href="#mt" x="305" y="702"/><use href="#mt" x="306" y="765"/><use href="#mt" x="486" y="790"/><use href="#mt" x="549" y="740"/><use href="#mt" x="416" y="868"/><use href="#mt" x="640" y="1111"/><use href="#mx" x="550" y="708"/>
        </g>
        <g transform="translate(1060 480) scale(.33333)">
          <use href="#mt" x="429" y="508"/><use href="#mx" x="164" y="551"/><use href="#mt" x="195" y="557"/><use href="#mt" x="110" y="651"/><use href="#mt" x="286" y="651"/><use href="#mt" x="486" y="670"/><use href="#mt" x="505" y="788"/><use href="#mt" x="276" y="970"/><use href="#mt" x="703" y="679"/><use href="#mt" x="743" y="645"/><use href="#mt" x="787" y="663"/><use href="#mt" x="691" y="813"/><use href="#mt" x="634" y="836"/><use href="#mt" x="800" y="1019"/><use href="#mt" x="857" y="1013"/><use href="#mx" x="128" y="543"/><use href="#mw" x="153" y="556"/>
        </g>
      </svg></div>
    </div>
  </div>
</main>
<aside class="scroll"><svg width="10" height="6"><path d="M0 5.500L5 .5l5 5z" fill="#8a8a8a"/></svg><div class="thumb"></div><svg width="10" height="6"><path d="M0 .5l5 5 5-5z" fill="#8a8a8a"/></svg></aside>
<div class="player"><svg class="dismiss" width="18" height="18" fill="none" stroke="#000"><circle cx="9" cy="9" r="7.700" fill="#fff" stroke-width="1.200"/><path d="M5.300 5.300l7.400 7.400M12.700 5.300l-7.400 7.400" stroke-width="1.200"/></svg><div class="video"><svg width="60" height="60"><path d="M43.300 7A27.200 27.200 0 1 0 17.400 54.600" fill="none" stroke="#f1f1f1" stroke-width="4"/></svg></div></div>
</div>
</div>

<footer class="taskbar">
  <div class="apps">
    <div><svg viewBox="0 0 24 24"><path d="M4 6l7-1v6.500H4zM12 4.900L20 4v7.500h-8zM4 12.500h7V19l-7-1zM12 12.500h8V20l-8-1z" fill="#fff"/></svg></div>
    <div><svg viewBox="0 0 24 24" fill="none" stroke="#fff" stroke-width="1.800"><circle cx="13" cy="9.500" r="8"/><path d="M8 15.500L1.500 23"/></svg></div>
    <div><svg viewBox="0 0 24 24" fill="none" stroke="#fff" stroke-width="1.400"><path d="M4.500 8h9v8h-9zM4.500 3v2.500h9V3M4.500 21v-2.500h9V21M17.500 3v4M17.500 13v8M16 9h3v2h-3z"/></svg></div>
  </div>
  <i class="tsep"></i>
  <div class="apps rest">
    <div><svg viewBox="0 0 24 24"><path d="M1 3h8l2 2h11v16H1z" fill="#f3b72d"/><path d="M1 8h21v13H1z" fill="#ffd766"/><path d="M5 21v-8h14v8h-4v-4H9v4z" fill="#3b9fe2"/></svg></div>
    <div><svg viewBox="0 0 24 24"><path d="M23 4Q12-3 6 6q-4 9 3 15 7 4 14-2v-4q-8 4-11-1-2-7 4-8 4 0 7 2z" fill="#d83a28"/><path d="M15 0l-5 10" stroke="#2e86dc" stroke-width="3"/><path d="M5 11l9 5-5 8-9-4q4-3 5-9z" fill="#f5cf94"/><path d="M6 8l9 5-1 4-9-5z" fill="#2f79cc"/></svg></div>
    <div><svg viewBox="0 0 24 24"><ellipse cx="10" cy="10" rx="9" ry="8" fill="#eee" transform="rotate(-40 10 10)"/><ellipse cx="11" cy="8" rx="9" ry="6" fill="#d83a44" transform="rotate(-40 11 8)"/><ellipse cx="12" cy="7" rx="7" ry="4" fill="#fff" transform="rotate(-40 12 7)"/><g fill="none" stroke="#2580c8" stroke-width="2"><circle cx="15" cy="21" r="2"/><circle cx="21" cy="18" r="2"/><path d="M11 14l8 3M17 13l-1 6"/></g></svg></div>
    <div><svg viewBox="0 0 24 24"><rect x="3" y="0" width="18" height="24" rx="1" fill="#76818d"/><path d="M5 2h14v4H5z" fill="#5fd3f7"/><path d="M5 9h3.500v3H5zM10 9h3.500v3H10zM15 9h3.500v3H15zM5 14h3.500v3H5zM10 14h3.500v3H10zM5 19h3.500v3H5zM10 19h3.500v3H10z" fill="#e6eaf0"/><path d="M15 14h4v8h-4z" fill="#12427e"/></svg></div>
    <div><svg viewBox="0 0 24 24"><path d="M8 1h15l-4 20H2z" fill="#d8f2f6"/><path d="M9 3l11 0-4 17-12-1z" fill="#62b6cc"/><path d="M20 3l2 3-4 16-4-2z" fill="#9b8d70"/></svg></div>
    <div><svg viewBox="0 0 24 24"><circle cx="12" cy="12" r="12" fill="#eee"/><path d="M1 7l4-3 12 17-4 2Q4 18 1 7z" fill="#63b22d"/><path d="M16 4q5-4 6 2l-3 6z" fill="#aaa"/></svg></div>
    <div><svg viewBox="0 0 24 24"><circle cx="12" cy="12" r="12" fill="#eee"/><path d="M16 4q5-4 6 2l-3 6z" fill="#aaa"/><path d="M3 12h14v10H6z" fill="#d81840"/><circle cx="10.500" cy="17" r="3.600" fill="#d81840" stroke="#fff" stroke-width="1.600"/><path d="M7 6v6M4 8h6" stroke="#d81840" stroke-width="2"/></svg></div>
    <div><svg viewBox="0 0 24 24"><rect x="7" y="0" width="10" height="17" fill="#8d939b"/><path d="M7 9h10v8H7z" fill="#4a4d53"/><circle cx="12" cy="13" r="2.600" fill="#f05a1e"/><path d="M5 16v3h14v-3M12 19v4M8 23h8" stroke="#8d939b" stroke-width="2" fill="none"/></svg></div>
    <div><svg viewBox="0 0 24 24"><circle cx="12" cy="12" r="11" fill="#2f6b24"/><path d="M2 11Q12 8 20 4M2 15q12-2 20-8M5 19q10-1 17-8" stroke="#6da038" stroke-width="1.200" fill="none"/><path d="M12 1a11 11 0 0 1 10 7L10 4z" fill="#a26a30"/></svg></div>
    <div class="run"><svg viewBox="0 0 24 24"><path d="M6 1h18v22H6z" fill="#2a7cd4"/><path d="M6 1h18v6H6z" fill="#41a5ee"/><path d="M6 16h18v7H6z" fill="#103f91"/><path d="M0 5h13v14H0z" fill="#185abd"/><path d="M2.500 8l2 8 2-7 2 7 2-8" fill="none" stroke="#fff" stroke-width="1.600"/></svg></div>
    <div><svg viewBox="0 0 24 24"><path d="M6 1h18v22H6z" fill="#21a366"/><path d="M15 1h9v7h-9z" fill="#33c481"/><path d="M6 15h18v8H6z" fill="#185c37"/><path d="M0 5h13v14H0z" fill="#107c41"/><path d="M3.500 8l6 8M9.500 8l-6 8" stroke="#fff" stroke-width="1.800"/></svg></div>
    <div><svg viewBox="0 0 24 24"><circle cx="13" cy="12" r="11" fill="#d35230"/><path d="M13 1a11 11 0 0 1 11 11H13z" fill="#ff8f6b"/><path d="M0 5h13v14H0z" fill="#c43e1c"/><path d="M4.500 17V8h2.500a2.300 2.300 0 0 1 0 5H5" fill="none" stroke="#fff" stroke-width="1.800"/></svg></div>
    <div><svg viewBox="0 0 24 24"><path d="M4 1h11l5 5v17H4z" fill="#f6f6f6"/><path d="M15 1l5 5h-5z" fill="#bbb"/></svg></div>
    <div><svg viewBox="0 0 24 24"><path d="M5 3h19l-5 18H0z" fill="#3a78dc"/><path d="M8 6l6 6-8 6M13 18h5" fill="none" stroke="#fff" stroke-width="2.200"/></svg></div>
    <div><svg viewBox="0 0 24 24"><circle cx="12" cy="12" r="10.500" fill="#1a1010" stroke="#e02020" stroke-width="1.500"/><circle cx="12" cy="12" r="4" fill="none" stroke="#e82222" stroke-width="2.500"/><path d="M12 3.500v5l4-2M19 11l-3 6M8 17l-3-6" stroke="#e82222" stroke-width="1.800" fill="none"/></svg></div>
    <div><svg viewBox="0 0 24 24"><rect x="1" width="22" height="24" rx="4" fill="#151a68"/><path d="M5 6h8v10H5zM9 4h7v8h-3M7 9h3M7 12h3" fill="none" stroke="#dfe5ff" stroke-width="1.200"/><circle cx="17" cy="17" r="6" fill="#3d8cf0"/><path d="M14.500 15a3 3 0 1 1 0 4" stroke="#fff" stroke-width="1.500" fill="none"/></svg></div>
    <div><svg viewBox="0 0 24 24"><rect x="1" width="22" height="24" rx="3" fill="#3f78b4"/><path d="M2 3h3v4H2zM8 3h3v4H8zM5 7h3v4H5zM2 11h3v4H2zM5 16h3v4H5z" fill="#8fc3f2"/><path d="M13 1h9v22h-9z" fill="#5da0e4"/><path d="M12 0v24M10 12h4" stroke="#1e4a7c" stroke-width="1.500"/></svg></div>
    <div><svg viewBox="0 0 24 24"><rect width="24" height="24" fill="#fff"/><path d="M9 3h11v18H10M12 7h5M12 11h5M14 15h3" fill="none" stroke="#28a8e0" stroke-width="1.800"/><circle cx="8" cy="13" r="4" fill="#fff" stroke="#28a8e0" stroke-width="2"/><path d="M5 17v4h7v-4" stroke="#28a8e0" stroke-width="2" fill="none"/></svg></div>
    <div><svg viewBox="0 0 24 24"><circle cx="12" cy="12" r="12" fill="#3447ff"/><circle cx="12" cy="12" r="8" fill="none" stroke="#fff" stroke-width="1.300" stroke-dasharray="3 1"/><circle cx="12" cy="12" r="6" fill="#fff"/><path d="M7 14l-1 4 4-1z" fill="#fff"/></svg></div>
    <div><svg viewBox="0 0 24 24"><rect x="1" y="2" width="22" height="20" fill="#050505" stroke="#aaa"/><path d="M1 2h22v3H1z" fill="#ccc"/><path d="M4 9h3M9 9h2M13 9l3 3" stroke="#fff" stroke-width="1.500"/></svg></div>
    <div><svg viewBox="0 0 24 24"><circle cx="12" cy="12" r="12" fill="#2292e8"/><path d="M4 12h13q0-2 1-3 1 1 1 2.500 1 0 2 .5-1 2-4 2-2 5-7 5-6 0-6-7z" fill="#fff"/><path d="M6 10h9M9 7.500h5M12 5.500h2" stroke="#fff" stroke-width="2" stroke-dasharray="2 .6"/></svg></div>
    <div class="run"><svg viewBox="0 0 24 24"><use href="#chrome"/></svg><em class="g">F</em></div>
    <div><svg viewBox="0 0 24 24"><path d="M12 0l6 6-6 6-6-6z" fill="#ee5a4a"/><path d="M6 6l6 6-6 6-6-6z" fill="#6fa0f0"/><path d="M18 6l6 6-6 6-6-6z" fill="#7cc55a"/><path d="M12 12l6 6-6 6-6-6z" fill="#f5cc50"/><path d="M9 3l3 6v9M12 9l5 3" stroke="#333" stroke-width="2" fill="none"/></svg></div>
    <div><svg viewBox="0 0 24 24"><rect x="1" y="1" width="22" height="23" rx="5" fill="#fff"/><path d="M6 7h10v2.500L8 15v2.500h10M18 7v2.500L8 15M6 7v2.500l12 5.500v2.500" fill="none" stroke="#000" stroke-width="2"/></svg></div>
    <div><svg viewBox="0 0 24 24"><path d="M8 2h7l9 14h-7z" fill="#ffba00"/><path d="M8 2L0 16l4 6 8-14z" fill="#11a861"/><path d="M8 16h16l-4 6H4z" fill="#3777e3"/><path d="M17 16h7l-4 6z" fill="#ea4335"/></svg></div>
    <div class="run cur"><svg viewBox="0 0 24 24"><use href="#chrome"/></svg><em class="t">T</em></div>
    <div class="run"><svg viewBox="0 0 24 24"><path d="M12 0l10 5v14l-10 5-10-5V5z" fill="#24d99a"/><circle cx="12" cy="8.500" r="4.500" fill="#12e0a5" stroke="#134a40" stroke-width="1.800"/><path d="M12 8v13M12 18h2.500" stroke="#134a40" stroke-width="1.800"/></svg></div>
    <div class="run"><svg viewBox="0 0 24 24"><use href="#chrome"/></svg><em class="p">T</em></div>
    <div class="run"><svg viewBox="0 0 24 24"><path d="M12 0l10 5v14l-10 5-10-5V5z" fill="#3bea58"/><path d="M9 6v12M15.500 8L10 13l5.500 5" fill="none" stroke="#123f20" stroke-width="2.600"/></svg></div>
  </div>
  <div class="tray">
    <i class="tsep"></i><span class="links">Links</span>
    <svg width="12" height="8"><path d="M1 7l5-5 5 5" fill="none" stroke="#fff" stroke-width="1.400"/></svg>
    <svg width="16" height="12"><path d="M1.500 1.500h12v9h-12zM4.500 4h3v4h-3z" fill="none" stroke="#fff" stroke-width="1.300"/><path d="M15 4v4" stroke="#fff"/></svg>
    <svg width="16" height="14" fill="none" stroke="#fff" stroke-width="1.200"><path d="M1.500 13A11 11 0 0 1 13 1.500M4.500 13A8 8 0 0 1 13 5M8 13a5 5 0 0 1 5-4.500M10.500 13q.5-2 2.500-2"/></svg>
    <svg width="18" height="16" fill="none" stroke="#fff" stroke-width="1.200"><path d="M1.500 5.500h3l4-4v13l-4-4h-3zM10.500 5.500q1.500 2.500 0 5M12.800 3.500q2.700 4.500 0 9M15 1.500q4 6.500 0 13"/></svg>
    <div class="clock">16:39<br>05/09/2025</div>
    <div class="notif"><svg width="20" height="20"><path d="M1 2h17v13H9l-4 3.500V15H1z" fill="#fff"/><path d="M4 6h11M4 9h11M4 12h7" stroke="#2b2a2b"/></svg><b>4</b></div>
  </div>
</footer>
</body>
</html>
```
FILE: styles.css
```css
* { box-sizing: border-box; }
body { margin: 0; width: 1920px; height: 1080px; overflow: hidden; font-family: "Open Sans", "Noto Sans", sans-serif; color: #2d3748; display: flex; flex-direction: column; }
p, h1 { margin: 0; font-weight: 400; }
.defs { position: absolute; }
.browser { height: 1040px; display: flex; flex-direction: column; background: #fff3ff; }

.tabstrip { height: 40px; background: #edd5f7; display: flex; flex: none; }
.tabsearch { width: 28px; height: 28px; margin: 6px 0 0 6px; border-radius: 9px; background: #f8e8fe; display: grid; place-items: center; }
.tabs { display: flex; margin-left: 5px; }
.tab { width: 184.400px; height: 34px; margin-top: 6px; padding: 0 15px 4px 10px; display: flex; align-items: center; font-size: 11.400px; letter-spacing: -.11px; color: #4d3457; position: relative; }
.tab .fav { width: 16px; height: 16px; flex: none; }
.tab span { flex: 1; margin-left: 8px; white-space: nowrap; overflow: hidden; mask-image: linear-gradient(90deg, #000 86%, transparent); }
.tab:first-child { padding-left: 8px; padding-right: 16px; }
.tab .close { width: 10px; height: 10px; margin-left: 12px; flex: none; color: #4d3457; }
.tab.active { background: #fff3ff; border-radius: 10px 10px 0 0; color: #1f1626; width: 180px; margin-right: 4.400px; padding-left: 9px; padding-right: 11px; }
.tab.active .close { color: #1f1626; }
.tab.active::before, .tab.active::after { content: ""; position: absolute; bottom: 0; width: 10px; height: 10px; }
.tab.active::before { left: -10px; background: radial-gradient(circle at 0 0, transparent 10px, #fff3ff 10.500px); }
.tab.active::after { right: -10px; background: radial-gradient(circle at 100% 0, transparent 10px, #fff3ff 10.500px); }
.tab.sep::before { content: ""; position: absolute; left: -1px; top: 6px; width: 2px; height: 16px; background: #dba2ff; }
.newtab { width: 32px; height: 40px; display: grid; place-items: center; position: relative; }
.newtab::before { content: ""; position: absolute; left: -1px; top: 12px; width: 2px; height: 16px; background: #dba2ff; }
.winbtns { display: flex; gap: 34px; margin: 14px 17px 0 auto; }

.toolbar { height: 47px; flex: none; border-bottom: 1px solid #e8dce9; display: flex; align-items: center; border-radius: 8px 8px 0 0; }
.nav { display: flex; gap: 16px; margin-left: 12px; }
.nav svg, .acts svg, .ln { width: 20px; height: 20px; fill: none; stroke: #4d3a5c; stroke-width: 1.600; }
.nav .dim { stroke: #b3a5b8; }
.omnibox { width: 744px; height: 34px; margin-left: 16px; border-radius: 17px; background: #efe4f1; display: flex; align-items: center; }
.site { width: 24px; height: 24px; margin-left: 5px; border-radius: 50%; background: #fff5ff; display: grid; place-items: center; }
.url { font-size: 13.400px; letter-spacing: -.13px; margin-left: 8px; color: #5c4c66; flex: 1; }
.url b { font-weight: 400; color: #1f1626; }
.star { width: 20px; height: 20px; margin-right: 14px; fill: none; stroke: #4d3a5c; stroke-width: 1.500; }
.exts { display: flex; align-items: center; gap: 20px; margin-left: 18px; }
.exts svg { width: 16px; height: 16px; }
.exts svg.big { width: 20px; height: 20px; margin-left: -1px; }
.vr { width: 2px; height: 16px; margin-left: 15px; background: #ecd2fb; flex: none; }
.exts.acts { gap: 16px; margin-left: 16px; }
.exts.acts svg { width: 20px; height: 20px; }
.avatar { width: 20px; height: 20px; margin-left: 17px; border-radius: 50%; background: #00907c; color: #d8fff6; font-size: 10px; display: grid; place-items: center; }
.kebab { margin-left: 23px; }

.view { flex: 1; display: flex; position: relative; min-height: 0; background: #fff; }
.page { width: 1905px; overflow: hidden; background: #fff; }
.brand { height: 114px; padding: 15px 197px; background: #304070; }
.wordmark { font: 300 26px Lato, sans-serif; fill: #e6e9f2; }
.tagline { font: 300 11px Lato, sans-serif; fill: #b6bed6; }
.searchbar { height: 62px; padding: 0 196px 0 197px; background: #4b64a6; display: flex; align-items: center; gap: 5px; box-shadow: 0 1px 3px rgba(0,0,0,.2); }
.box { height: 38px; background: #fff; border: 1px solid #cbd0de; border-radius: 3px; display: flex; align-items: center; font-size: 15.200px; box-shadow: 0 1px 2px rgba(0,0,0,.3); }
.query { width: 256px; padding-left: 11px; letter-spacing: -.05px; }
.type { width: 95px; margin-left: -.5px; padding: 0 10px 0 11px; justify-content: space-between; }
.gear { width: 45px; justify-content: center; }
.go { width: 101.500px; padding-left: 13px; gap: 9px; font-weight: 500; font-size: 15px; }
.donate { width: 79px; height: 36px; margin-left: auto; border: 1px solid #2e3a66; border-radius: 5px; background: linear-gradient(#f8f800, #ff9600); display: grid; place-items: center; font-style: italic; font-size: 13.600px; box-shadow: 0 1px 2px rgba(0,0,0,.4); }
.social { width: 42px; height: 34px; border-radius: 5px; justify-content: center; border-color: #a9b0c6; margin-left: 3px; }
.social.fb { margin-left: -1px; }

.content { display: flex; gap: 16px; padding: 16px 197px 0; align-items: flex-start; }
.results { width: 606px; border: 1px solid #e2e4ea; border-radius: 4px; }
.row { height: 41px; border-bottom: 1px solid #e2e4ea; display: flex; align-items: flex-start; padding: 2px 10px 0 8px; }
.row.fail { height: 39px; padding-top: 1px; }
.row.hover { background: #f1f3f6; }
.flag { width: 18px; height: 11px; margin-top: 6px; box-shadow: 0 0 1px #bbb; flex: none; }
.who { margin-left: 7.500px; flex: 1; white-space: nowrap; }
.who p { font-size: 13.250px; line-height: 20px; }
.who small { display: block; font-size: 11.200px; line-height: 16px; color: #4a5568; }
.ips { font: 11px/16px "DejaVu Sans Mono", monospace; color: #6202ee; text-align: right; margin-top: 2.700px; }
.st { width: 14px; height: 12px; margin: 12px 0 0 9px; flex: none; }

.side { width: 574px; }
h1 { font-size: 19px; line-height: 28px; padding-top: 1px; white-space: nowrap; }
.intro { font-size: 13.200px; line-height: 20px; margin-top: 3px; white-space: nowrap; }
.map { margin-top: 80px; height: 460px; border: 1px solid #ddd; border-radius: 3px; background: #eee; overflow: hidden; }
.map svg { display: block; }
.borders { fill: none; stroke: #a3afcf; stroke-width: 2; }

.scroll { width: 15px; background: #fcfcfc; display: flex; flex-direction: column; align-items: center; padding: 6px 0 7px; }
.thumb { width: 9px; height: 189px; margin: 5.500px 0 auto; border-radius: 5px; background: #8b8b8b; }

.player { position: absolute; right: 25px; bottom: 10px; width: 350px; }
.dismiss { display: block; margin: 0 -1px 4px auto; }
.video { height: 197px; background: #000; box-shadow: 0 0 6px 2px rgba(0,0,0,.45); display: grid; place-items: center; }

.taskbar { height: 40px; display: flex; align-items: center; background: linear-gradient(90deg, #2d2d2e 0, #2c2a2a 26%, #3a2e36 33%, #413c42 42%, #443c3e 52%, #41302b 61%, #3a2a26 67%, #2b2a2a 72%, #292929 100%); }
.apps { display: flex; height: 40px; }
.apps > div { width: 48px; height: 40px; display: grid; place-items: center; position: relative; }
.apps svg { width: 24px; height: 24px; }
.tsep { width: 4px; height: 24px; border: solid #6a6a6a; border-width: 0 1px; flex: none; }
.apps + .tsep { margin-left: 6px; }
.apps.rest { margin-left: 12px; }
.apps.rest > div { width: 49.020px; }
.apps .run::after { content: ""; position: absolute; left: 4px; right: 5px; bottom: 0; height: 2px; background: #76b9ed; }
.apps .cur { background: #555; }
.apps .cur::after { left: 0; right: 0; }
.apps em { position: absolute; right: 9px; bottom: 4px; width: 15px; height: 15px; border-radius: 50%; color: #fff; font: 10px/15px "Open Sans", sans-serif; text-align: center; }
.g { background: #3c6a1c; }
.t { background: #008577; }
.p { background: #7b1fa2; }
.tray { flex: 1; display: flex; align-items: center; justify-content: flex-end; gap: 12px; color: #fff; font-size: 11.300px; letter-spacing: -.1px; padding-right: 15px; }
.tray svg + svg { margin-left: -1px; }
.tray .tsep { margin-right: -1px; }
.links { margin-right: -2px; }
.clock { line-height: 17.500px; text-align: center; width: 60px; margin-left: -4px; }
.notif { position: relative; width: 30px; height: 24px; margin-left: 2px; }
.notif b { position: absolute; left: 12px; top: 9px; width: 16px; height: 16px; border-radius: 50%; background: #333; border: 1px solid #888; font: 11px/14px "Open Sans", sans-serif; text-align: center; }
```
